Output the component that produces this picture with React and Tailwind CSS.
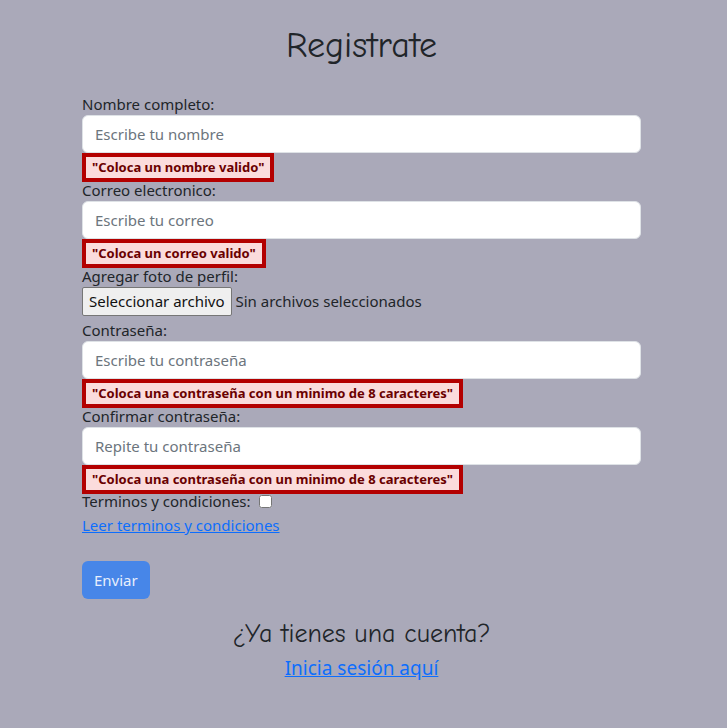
const ErrorBox = ({ children }) => (
  <div className="flex">
    <div className="border-4 border-[#b30000] bg-[#fbdcdc] px-[6px] h-[29px] flex items-center text-[13px] font-bold text-[#6a0000] leading-none">
      {children}
    </div>
  </div>
);

const Label = ({ children, className = '' }) => (
  <label className={`block h-[21px] leading-[21px] text-[15px] text-[#212529] ${className}`}>{children}</label>
);

const Input = ({ placeholder, type = 'text' }) => (
  <input
    type={type}
    placeholder={placeholder}
    className="w-full h-[38px] rounded-[6px] border border-[#dee2e6] bg-white px-[12px] text-[15px] text-[#212529] placeholder:text-[#6c757d] outline-none"
  />
);

const comic = { fontFamily: '"Comic Sans MS", "Comic Neue", cursive' };

export default function App() {
  return (
    <div className="min-h-[728px] w-full bg-[#aaa9b9] text-[#212529]" style={{ fontFamily: '"Segoe UI", "Noto Sans", "Open Sans", sans-serif' }}>
      <div className="w-[559px] ml-[82px] pt-[23px]">
        <h1 className="text-center text-[36px] leading-[46px] text-[#212529] mb-[25px]" style={comic}>
          Registrate
        </h1>

        <form className="flex flex-col">
          <Label>Nombre completo:</Label>
          <Input placeholder="Escribe tu nombre" />
          <ErrorBox>"Coloca un nombre valido"</ErrorBox>

          <Label className="mt-[-2px]">Correo electronico:</Label>
          <Input placeholder="Escribe tu correo" type="email" />
          <ErrorBox>"Coloca un correo valido"</ErrorBox>

          <Label className="mt-[-2px]">Agregar foto de perfil:</Label>
          <div className="flex items-center gap-[4px] h-[29px]">
            <div className="h-[29px] px-[6px] flex items-center bg-[#efefef] border border-[#767676] rounded-[2px] text-[15px] text-[#111]">
              Seleccionar archivo
            </div>
            <span className="text-[15px] text-[#212529]">Sin archivos seleccionados</span>
          </div>

          <Label className="mt-[4px]">Contraseña:</Label>
          <Input placeholder="Escribe tu contraseña" type="password" />
          <ErrorBox>"Coloca una contraseña con un minimo de 8 caracteres"</ErrorBox>

          <Label className="mt-[-2px]">Confirmar contraseña:</Label>
          <Input placeholder="Repite tu contraseña" type="password" />
          <ErrorBox>"Coloca una contraseña con un minimo de 8 caracteres"</ErrorBox>

          <div className="flex items-center h-[20px] mt-[-3px] text-[15px]">
            <span>Terminos y condiciones:</span>
            <input type="checkbox" className="ml-[8px] w-[13px] h-[13px]" />
          </div>
          <a href="#" className="mt-[2px] text-[15px] leading-[24px] text-[#0d6efd] underline self-start">
            Leer terminos y condiciones
          </a>

          <button
            type="button"
            className="mt-[24px] self-start h-[38px] px-[12px] rounded-[6px] bg-[#4786e8] text-[15px] text-[#e8effc]"
          >
            Enviar
          </button>
        </form>

        <div className="text-center mt-[18px]" style={comic}>
          <p className="text-[26px] leading-[34px] text-[#212529]">¿Ya tienes una cuenta?</p>
        </div>
        <div className="text-center mt-[3px]">
          <a href="#" className="text-[19px] leading-[28px] text-[#0d6efd] underline">Inicia sesión aquí</a>
        </div>
      </div>
    </div>
  );
}
